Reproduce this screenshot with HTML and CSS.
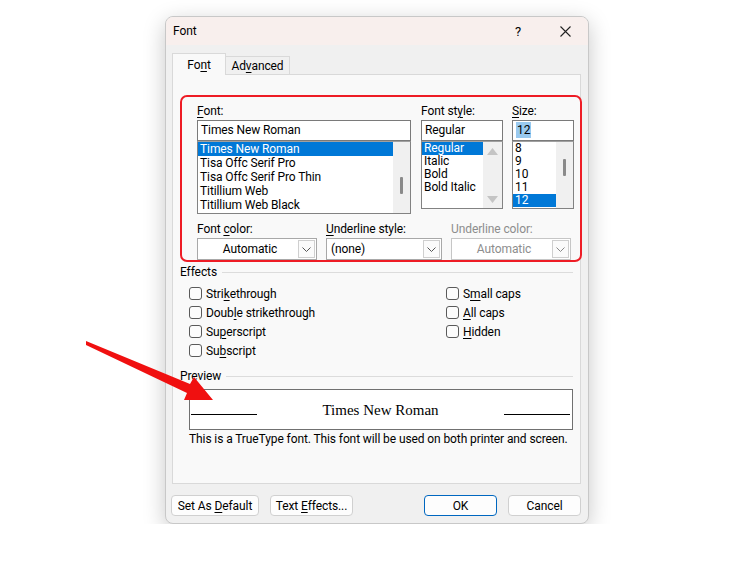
FILE: index.html
```html
<!DOCTYPE html>
<html lang="en">
<head>
    <meta charset="UTF-8">
    <title>Font</title>
    <link rel="stylesheet" href="styles.css">
</head>
<body>
    <div class="dialog">
        <div class="titlebar">
            <span class="title">Font</span>
            <span class="tb-btn help">?</span>
            <span class="tb-btn close">
                <svg width="11" height="11" viewBox="0 0 11 11"><path d="M0.5 0.5 L10.5 10.5 M10.5 0.5 L0.5 10.5" stroke="#222" stroke-width="1.1" fill="none"/></svg>
            </span>
        </div>

        <div class="tabs">
            <div class="tab active">Fo<u>n</u>t</div>
            <div class="tab">Ad<u>v</u>anced</div>
        </div>

        <div class="panel">
            <div class="font-grid">
                <div class="col col-font">
                    <label><u>F</u>ont:</label>
                    <div class="field">Times New Roman</div>
                    <div class="list list-font">
                        <div class="items">
                            <div class="item selected">Times New Roman</div>
                            <div class="item">Tisa Offc Serif Pro</div>
                            <div class="item">Tisa Offc Serif Pro Thin</div>
                            <div class="item">Titillium Web</div>
                            <div class="item">Titillium Web Black</div>
                        </div>
                        <div class="scroll"><div class="thumb thumb-font"></div></div>
                    </div>
                </div>
                <div class="col col-style">
                    <label>Font st<u>y</u>le:</label>
                    <div class="field">Regular</div>
                    <div class="list list-style">
                        <div class="items">
                            <div class="item selected">Regular</div>
                            <div class="item">Italic</div>
                            <div class="item">Bold</div>
                            <div class="item">Bold Italic</div>
                        </div>
                        <div class="scroll scroll-arrows">
                            <svg width="11" height="7" viewBox="0 0 11 7"><path d="M5.5 0 L11 7 L0 7 Z" fill="#c4c4c4"/></svg>
                            <svg width="11" height="7" viewBox="0 0 11 7"><path d="M0 0 L11 0 L5.5 7 Z" fill="#c4c4c4"/></svg>
                        </div>
                    </div>
                </div>
                <div class="col col-size">
                    <label><u>S</u>ize:</label>
                    <div class="field"><span class="sel-text">12</span></div>
                    <div class="list list-size">
                        <div class="items">
                            <div class="item">8</div>
                            <div class="item">9</div>
                            <div class="item">10</div>
                            <div class="item">11</div>
                            <div class="item selected">12</div>
                        </div>
                        <div class="scroll"><div class="thumb thumb-size"></div></div>
                    </div>
                </div>
            </div>

            <div class="combo-row">
                <div class="combo-col wide">
                    <label>Font <u>c</u>olor:</label>
                    <div class="combo center">
                        <span class="combo-text">Automatic</span>
                        <span class="chev"><svg width="9" height="5" viewBox="0 0 9 5"><path d="M0.5 0.5 L4.5 4.5 L8.5 0.5" stroke="#555" fill="none"/></svg></span>
                    </div>
                </div>
                <div class="combo-col">
                    <label><u>U</u>nderline style:</label>
                    <div class="combo">
                        <span class="combo-text">(none)</span>
                        <span class="chev"><svg width="9" height="5" viewBox="0 0 9 5"><path d="M0.5 0.5 L4.5 4.5 L8.5 0.5" stroke="#555" fill="none"/></svg></span>
                    </div>
                </div>
                <div class="combo-col wide disabled">
                    <label>Underline color:</label>
                    <div class="combo center">
                        <span class="combo-text">Automatic</span>
                        <span class="chev"><svg width="9" height="5" viewBox="0 0 9 5"><path d="M0.5 0.5 L4.5 4.5 L8.5 0.5" stroke="#888" fill="none"/></svg></span>
                    </div>
                </div>
            </div>

            <div class="group-head first"><span>Effects</span><div class="rule"></div></div>
            <div class="checks">
                <div class="check"><span class="box"></span>Stri<u>k</u>ethrough</div>
                <div class="check"><span class="box"></span>S<u>m</u>all caps</div>
                <div class="check"><span class="box"></span>Doub<u>l</u>e strikethrough</div>
                <div class="check"><span class="box"></span><u>A</u>ll caps</div>
                <div class="check"><span class="box"></span>Su<u>p</u>erscript</div>
                <div class="check"><span class="box"></span><u>H</u>idden</div>
                <div class="check"><span class="box"></span>Su<u>b</u>script</div>
            </div>

            <div class="group-head"><span>Preview</span><div class="rule"></div></div>
            <div class="preview">
                <div class="pline"></div>
                <span class="ptext">Times New Roman</span>
                <div class="pline"></div>
            </div>
            <div class="desc">This is a TrueType font. This font will be used on both printer and screen.</div>

            <div class="highlight"></div>
        </div>

        <div class="buttons">
            <button class="btn btn-default">Set As <u>D</u>efault</button>
            <button class="btn btn-effects">Text <u>E</u>ffects...</button>
            <button class="btn btn-ok">OK</button>
            <button class="btn btn-cancel">Cancel</button>
        </div>
    </div>

    <svg class="arrow" width="750" height="562" viewBox="0 0 750 562">
        <polygon points="86,341 190,384 194,377 213,400 184,400 187,393 86,345" fill="#f01010"/>
    </svg>
</body>
</html>
```

FILE: styles.css
```css
body {
    margin: 0;
    background: #fff;
    font-family: Roboto, "Noto Sans", sans-serif;
    font-size: 12px;
    letter-spacing: -0.1px;
    color: #000;
}
u {
    text-decoration-thickness: 1px;
    text-underline-offset: 2px;
}
.dialog {
    margin: 16px 0 0 165px;
    width: 422px;
    height: 506px;
    border: 1px solid #c8c8c8;
    border-radius: 8px;
    background: #f0f0f0;
    box-shadow: 0 6px 22px rgba(0, 0, 0, 0.22);
    overflow: hidden;
}
.titlebar {
    height: 28px;
    background: #f8efed;
    display: flex;
    align-items: center;
    padding-left: 7px;
}
.title {
    flex: 1;
}
.tb-btn {
    width: 46px;
    height: 28px;
    display: flex;
    align-items: center;
    justify-content: center;
}
.help {
    font-size: 13px;
    margin-right: 1px;
}

/* tabs */
.tabs {
    display: flex;
    align-items: flex-end;
    margin: 8px 0 0 6px;
    height: 21px;
}
.tab {
    box-sizing: border-box;
    height: 18px;
    width: 64px;
    border: 1px solid #d9d9d9;
    border-left: none;
    border-bottom: none;
    text-align: center;
    line-height: 18px;
}
.tab.active {
    width: 54px;
    height: 22px;
    margin-bottom: -1px;
    border-left: 1px solid #d9d9d9;
    background: #f9f9f9;
    line-height: 22px;
    position: relative;
    z-index: 1;
}
.panel {
    position: relative;
    box-sizing: border-box;
    height: 410px;
    margin: 0 7px 0 6px;
    border: 1px solid #d9d9d9;
    background: #f9f9f9;
}

/* font / style / size */
.font-grid {
    display: flex;
    margin: 28px 0 0 24px;
}
label {
    display: block;
    line-height: 16px;
    height: 16px;
    margin-bottom: 1px;
}
.col-font { width: 214px; }
.col-style { width: 82px; margin-left: 10px; }
.col-size { width: 62px; margin-left: 9px; }
.field {
    box-sizing: border-box;
    height: 21px;
    border: 1px solid #7a7a7a;
    background: #fff;
    padding-left: 3px;
    line-height: 19px;
}
.sel-text {
    background: #99c9ef;
    padding: 1px 1px;
}
.list {
    box-sizing: border-box;
    display: flex;
    border: 1px solid #828282;
    border-top-color: #a0a0a0;
    background: #fff;
}
.list-font { height: 73px; }
.list-style, .list-size { height: 68px; }
.items {
    flex: 1;
}
.item {
    height: 14px;
    line-height: 14px;
    padding-left: 2px;
}
.list-style .item, .list-size .item {
    height: 13px;
    line-height: 13px;
}
.item.selected {
    background: #0078d7;
    color: #fff;
}
.scroll {
    width: 17px;
    background: #f0f0f0;
    position: relative;
}
.list-style .scroll { width: 19px; }
.scroll-arrows {
    display: flex;
    flex-direction: column;
    align-items: center;
    justify-content: space-between;
    padding: 6px 0 5px;
    box-sizing: border-box;
}
.thumb {
    position: absolute;
    left: 7px;
    width: 3px;
    background: #8a8a8a;
    border-radius: 1px;
}
.thumb-font { top: 35px; height: 17px; }
.thumb-size { top: 17px; height: 17px; }

/* combos */
.combo-row {
    display: flex;
    margin: 7px 0 0 24px;
}
.combo-col { width: 117px; margin-right: 9px; }
.combo-col.wide { width: 121px; }
.combo-col:first-child { margin-right: 9px; }
.combo {
    box-sizing: border-box;
    height: 22px;
    border: 1px solid #a8a8a8;
    background: #fff;
    display: flex;
    align-items: center;
}
.combo-text {
    flex: 1;
    padding-left: 4px;
}
.combo.center .combo-text {
    text-align: center;
}
.chev {
    box-sizing: border-box;
    width: 17px;
    height: 18px;
    margin-right: 1px;
    border: 1px solid #cfcfcf;
    background: #fbfbfb;
    display: flex;
    align-items: center;
    justify-content: center;
}
.disabled label, .disabled .combo-text {
    color: #8d8d8d;
}
.disabled .combo {
    border-color: #c6c6c6;
}

/* groups */
.group-head {
    display: flex;
    align-items: center;
    margin: 8px 7px 0 7px;
    line-height: 16px;
}
.group-head.first {
    margin-top: 4px;
}
.rule {
    flex: 1;
    height: 1px;
    background: #dcdcdc;
    margin-left: 5px;
}
.checks {
    display: grid;
    grid-template-columns: 257px auto;
    margin: 4px 0 0 16px;
}
.check {
    height: 19px;
    display: flex;
    align-items: center;
}
.box {
    box-sizing: border-box;
    width: 13px;
    height: 13px;
    border: 1px solid #5a5a5a;
    border-radius: 3px;
    background: #fcfcfc;
    margin-right: 4px;
}
.preview {
    box-sizing: border-box;
    height: 41px;
    margin: 5px 7px 0 16px;
    border: 1px solid #707070;
    background: #fff;
    display: flex;
    align-items: flex-end;
    justify-content: space-between;
    padding: 0 2px 14px 1px;
}
.pline {
    width: 66px;
    height: 1px;
    background: #000;
}
.ptext {
    font-family: "Liberation Serif", serif;
    font-size: 15px;
    line-height: 15px;
    letter-spacing: 0;
    margin-bottom: -3px;
}
.desc {
    margin: 1px 0 0 16px;
    line-height: 16px;
    white-space: nowrap;
}
.highlight {
    position: absolute;
    left: 7px;
    top: 20px;
    width: 402px;
    height: 167px;
    box-sizing: border-box;
    border: 2px solid #ee1c25;
    border-radius: 7px;
}

/* buttons */
.buttons {
    display: flex;
    margin-top: 11px;
    padding: 0 7px 0 5px;
}
.btn {
    box-sizing: border-box;
    height: 21px;
    padding: 0;
    font-family: Roboto, "Noto Sans", sans-serif;
    font-size: 12px;
    letter-spacing: -0.1px;
    color: #000;
    background: #fdfdfd;
    border: 1px solid #d0d0d0;
    border-radius: 4px;
}
.btn-default { width: 88px; }
.btn-effects { width: 83px; margin-left: 11px; }
.btn-ok { width: 73px; margin-left: auto; border-color: #0067c0; }
.btn-cancel { width: 73px; margin-left: 11px; }

.arrow {
    position: absolute;
    left: 0;
    top: 0;
    pointer-events: none;
}
```
